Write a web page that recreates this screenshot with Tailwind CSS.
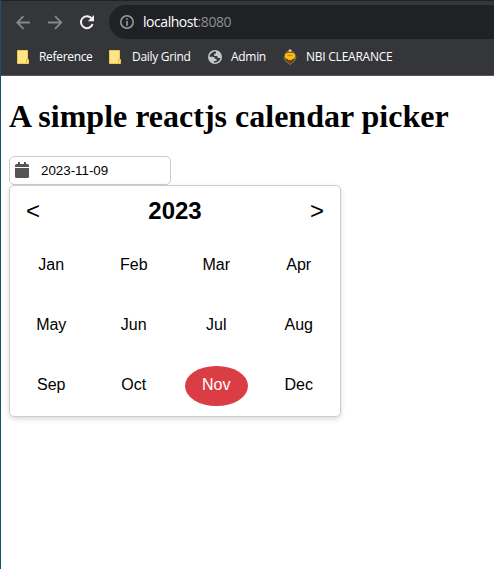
<!DOCTYPE html>
<html lang="en">
<head>
<meta charset="utf-8">
<title>Calendar picker</title>
<script src="https://cdn.jsdelivr.net/npm/@tailwindcss/browser@4"></script>
</head>
<body class="h-[569px] w-[494px] overflow-hidden border-l border-[#1a5272] bg-white text-black">
<header class="h-[76px] border-t border-b border-t-[#202124] border-b-[#5a5359] bg-[#35363a] font-['Open_Sans','Noto_Sans',sans-serif] text-white">
  <div class="flex h-[42px] items-start pt-1">
    <svg class="mt-[10px] ml-[15px] size-[15px]" viewBox="0 0 15 15" fill="none" stroke="#86878a" stroke-width="1.8"><path d="M14 7.5H1.5M7.5 1.2L1.2 7.5l6.3 6.3"/></svg>
    <svg class="mt-[10px] ml-[17px] size-[15px]" viewBox="0 0 15 15" fill="none" stroke="#86878a" stroke-width="1.8"><path d="M0 7.5h13M7 1.2l6.3 6.3L7 13.8"/></svg>
    <svg class="mt-[9px] ml-4 size-4" viewBox="0 0 16 16" fill="none"><path d="M13.6 10.2A6 6 0 1 1 12.3 4" stroke="#f1f1f1" stroke-width="2"/><path d="M15 1v6.2H8.8z" fill="#f1f1f1"/></svg>
    <div class="ml-[14px] flex h-[34px] flex-1 items-center rounded-l-full bg-[#202124] pl-[11px]">
      <svg class="size-[14px]" viewBox="0 0 14 14"><circle cx="7" cy="7" r="6.2" fill="none" stroke="#9aa0a6" stroke-width="1.5"/><path d="M6.200 3.200h1.600v1.600H6.200zM6.200 6h1.600v4.800H6.200z" fill="#9aa0a6"/></svg>
      <span class="ml-[9px] text-[14px] leading-5 tracking-[-0.45px]">localhost<span class="text-[#8b8e92]">:8080</span></span>
    </div>
  </div>
  <nav class="flex h-[28px] items-center text-[12px] leading-4">
    <svg class="ml-4 h-[14px] w-3" viewBox="0 0 12 14"><path d="M.5.5h10v9h1v4H.5z" fill="#ffe38b" stroke="#f0ca4e"/><path d="M9.500 13V9.500h2" fill="none" stroke="#e7b92e"/></svg>
    <span class="ml-[10px] w-[53px] whitespace-nowrap tracking-[-0.32px]">Reference</span>
    <svg class="ml-[17px] h-[14px] w-3" viewBox="0 0 12 14"><path d="M.5.5h10v9h1v4H.5z" fill="#ffe38b" stroke="#f0ca4e"/><path d="M9.500 13V9.500h2" fill="none" stroke="#e7b92e"/></svg>
    <span class="ml-[11px] w-[59px] whitespace-nowrap tracking-[-0.3px]">Daily Grind</span>
    <svg class="ml-[17px] size-[14px]" viewBox="0 0 14 14"><circle cx="7" cy="7" r="7" fill="#c4c7cb"/><path d="M8 1.500C5 1.500 1.800 3.500 1.600 6.700h3.200c1.200 0 2 .8 2 2h1.700v2.200H6v1.500c3 .7 6-1.600 6.400-4.600-.9.500-2 .4-2.600-.4-.5-.6-.5-1-.5-1.400H6.400V3.800H8z" fill="#35363a"/><path d="M8 1.500v2.300H6.400V6h2.900c0 1.200.9 2 2 2 .5 0 .8-.1 1.100-.3A5.500 5.500 0 0 0 8 1.500z" fill="#c4c7cb"/></svg>
    <span class="ml-[9px] w-[36px] whitespace-nowrap tracking-[-0.3px]">Admin</span>
    <svg class="ml-4 h-4 w-[14px]" viewBox="0 0 14 16"><path d="M7 1L3 3.500 1 8q0 4 6 7.500 6-3.500 6-7.500l-2-4.500z" fill="#51452c" stroke="#9a8849" stroke-width=".8"/><circle cx="7" cy="1.700" r="1.500" fill="#ddd1ad"/><path d="M4 4l3-1.500L10 4z" fill="#b65225"/><rect x="2" y="4" width="10" height="6" rx="2.500" fill="#f2c20d"/><path d="M4.500 6.500h5" stroke="#e57812" stroke-width="1.200"/><path d="M3.500 10h7L7 14z" fill="#a92a18"/><path d="M5 10.500h4" stroke="#eab512"/></svg>
    <span class="ml-[9px] whitespace-nowrap tracking-[-0.24px]">NBI CLEARANCE</span>
  </nav>
</header>
<main class="px-2 font-['Liberation_Sans',Arial,sans-serif]">
  <h1 class="pt-[22px] font-['Liberation_Serif','Times_New_Roman',serif] text-[32px] leading-[37px] font-bold">A simple reactjs calendar picker</h1>
  <div class="mt-[21px] flex h-[29px] w-[162px] items-center rounded-[5px] border border-[#ccc] pl-[5px]">
    <svg class="mb-px h-4 w-[14px]" viewBox="0 0 14 16" fill="#555"><path d="M3 0h2v2h4V0h2v2h1.500Q14 2 14 3.500V5H0V3.500Q0 2 1.500 2H3zM0 6h14v8.500q0 1.500-1.500 1.500h-11Q0 16 0 14.500z"/></svg>
    <span class="ml-3 text-[13.333px] leading-[15px]">2023-11-09</span>
  </div>
  <section class="h-[232px] w-[332px] rounded-[5px] border border-[#ccc] shadow-[0_2px_5px_rgba(0,0,0,0.15)]">
    <div class="flex h-[50px] items-center justify-between px-4 text-[24px] leading-7">
      <span>&lt;</span><span class="font-bold">2023</span><span>&gt;</span>
    </div>
    <div class="grid auto-rows-[60px] grid-cols-4 text-center text-[16px] leading-[38px]">
      <div class="px-[10px] py-[10px]">Jan</div><div class="px-[10px] py-[10px]">Feb</div><div class="px-[10px] py-[10px]">Mar</div><div class="px-[10px] py-[10px]">Apr</div>
      <div class="px-[10px] py-[10px]">May</div><div class="px-[10px] py-[10px]">Jun</div><div class="px-[10px] py-[10px]">Jul</div><div class="px-[10px] py-[10px]">Aug</div>
      <div class="px-[10px] py-[10px]">Sep</div><div class="px-[10px] py-[10px]">Oct</div>
      <div class="px-[10px] py-[10px]"><div class="h-10 rounded-[50%] bg-[#db3d44] text-white">Nov</div></div>
      <div class="px-[10px] py-[10px]">Dec</div>
    </div>
  </section>
</main>
</body>
</html>
